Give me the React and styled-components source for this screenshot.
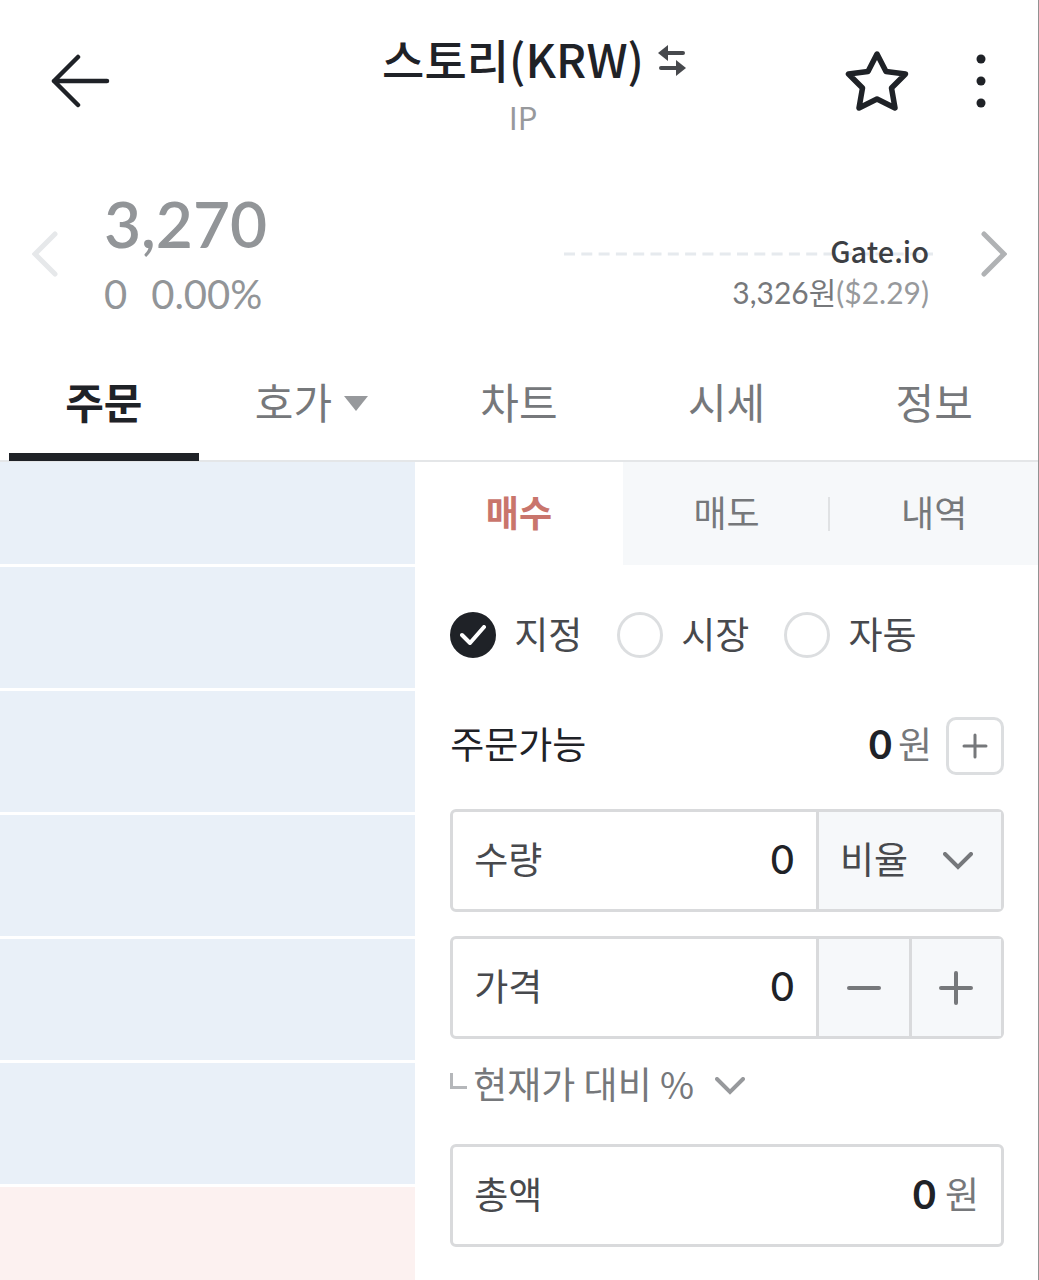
import React, { useState } from 'react';
import styled, { createGlobalStyle } from 'styled-components';

const MAIN_TABS = ['주문', '호가', '차트', '시세', '정보'];
const SIDE_TABS = ['매수', '매도', '내역'];
const ORDER_TYPES = ['지정', '시장', '자동'];
const BOOK_ROWS = ['ask', 'ask', 'ask', 'ask', 'ask', 'ask', 'bid'];

const Chevron = ({ color }) => (
  <svg width='30' height='18' viewBox='0 0 30 18' fill='none' aria-hidden='true'>
    <path d='M2 2L15 15L28 2' stroke={color} strokeWidth='4' strokeLinecap='round' />
  </svg>
);

const Plus = ({ size, stroke }) => (
  <svg width={size} height={size} viewBox={`0 0 ${size} ${size}`} aria-hidden='true'>
    <path
      d={`M2 ${size / 2}H${size - 2}M${size / 2} 2V${size - 2}`}
      stroke='#76787b'
      strokeWidth={stroke}
      strokeLinecap='round'
    />
  </svg>
);

const Header = () => (
  <TopBar>
    <IconButton aria-label='뒤로'>
      <svg width='60' height='54' viewBox='0 0 60 54' fill='none'>
        <path
          d='M28 3L4 27L28 51M4 27H57'
          stroke='#1f2227'
          strokeWidth='4.500'
          strokeLinecap='round'
          strokeLinejoin='round'
        />
      </svg>
    </IconButton>
    <TitleBox>
      <TitleRow>
        <h1>스토리(KRW)</h1>
        <IconButton aria-label='마켓 전환'>
          <svg width='28' height='32' viewBox='0 0 28 32' fill='#47494d'>
            <path d='M0 8L10 0V6H25Q27 6 27 8Q27 10 25 10H10V16Z' />
            <path d='M28 23L18 15V21H3Q1 21 1 23Q1 25 3 25H18V31Z' />
          </svg>
        </IconButton>
      </TitleRow>
      <Symbol>IP</Symbol>
    </TitleBox>
    <TopActions>
      <IconButton aria-label='관심'>
        <svg width='64' height='62' viewBox='0 0 64 62' fill='none'>
          <path
            d='M32 4L41 21.500L60.500 24L46.500 38L50 58L32 49L14 58L17.500 38L3.500 24L23 21.500Z'
            stroke='#1f2227'
            strokeWidth='5.500'
            strokeLinejoin='round'
          />
        </svg>
      </IconButton>
      <IconButton aria-label='더보기'>
        <svg width='10' height='54' viewBox='0 0 10 54' fill='#1f2227'>
          <circle cx='5' cy='5' r='4.500' />
          <circle cx='5' cy='27' r='4.500' />
          <circle cx='5' cy='49' r='4.500' />
        </svg>
      </IconButton>
    </TopActions>
  </TopBar>
);

const Ticker = () => (
  <TickerBar>
    <IconButton aria-label='이전'>
      <svg width='26' height='46' viewBox='0 0 26 46' fill='none'>
        <path d='M23 3L3 23L23 43' stroke='#e6e8ea' strokeWidth='5' strokeLinecap='round' />
      </svg>
    </IconButton>
    <PriceBox>
      <strong>3,270</strong>
      <Change>
        <span>0</span>
        <span>0.00%</span>
      </Change>
    </PriceBox>
    <Compare>
      <TrendLine viewBox='0 0 369 4' preserveAspectRatio='none' aria-hidden='true'>
        <path d='M0 2H369' stroke='#e6eaee' strokeWidth='3' strokeDasharray='11 6.300' />
      </TrendLine>
      <Exchange>
        <b>Gate.io</b>
        <span>
          3,326원<em>($2.29)</em>
        </span>
      </Exchange>
    </Compare>
    <IconButton aria-label='다음'>
      <svg width='26' height='46' viewBox='0 0 26 46' fill='none'>
        <path d='M3 3L23 23L3 43' stroke='#b0b2b4' strokeWidth='5' strokeLinecap='round' />
      </svg>
    </IconButton>
  </TickerBar>
);

const OrderForm = () => {
  const [side, setSide] = useState('매수');
  const [type, setType] = useState('지정');
  const [amount, setAmount] = useState('0');
  const [price, setPrice] = useState(0);

  return (
    <FormPanel>
      <SideTabs>
        {SIDE_TABS.map((item) => (
          <SideTab key={item} $active={item === side} onClick={() => setSide(item)}>
            {item}
          </SideTab>
        ))}
      </SideTabs>
      <Form onSubmit={(e) => e.preventDefault()}>
        <RadioRow>
          {ORDER_TYPES.map((item) => (
            <RadioLabel key={item}>
              <input
                type='radio'
                name='type'
                checked={item === type}
                onChange={() => setType(item)}
              />
              <RadioMark $checked={item === type}>
                {item === type && (
                  <svg width='26' height='20' viewBox='0 0 26 20' fill='none'>
                    <path
                      d='M2 10L10 18L24 2'
                      stroke='#fff'
                      strokeWidth='4'
                      strokeLinecap='round'
                      strokeLinejoin='round'
                    />
                  </svg>
                )}
              </RadioMark>
              <Text>{item}</Text>
            </RadioLabel>
          ))}
        </RadioRow>

        <BalanceRow>
          <Text>주문가능</Text>
          <Balance>
            <b>0</b>
            <Unit>원</Unit>
          </Balance>
          <AddButton type='button' aria-label='충전'>
            <Plus size={26} stroke={3} />
          </AddButton>
        </BalanceRow>

        <Field>
          <label htmlFor='amount'>수량</label>
          <input id='amount' value={amount} onChange={(e) => setAmount(e.target.value)} />
          <SelectBox>
            <select aria-label='비율' defaultValue='비율'>
              <option>비율</option>
            </select>
            <Chevron color='#76787b' />
          </SelectBox>
        </Field>

        <Field>
          <label htmlFor='price'>가격</label>
          <input id='price' value={price} onChange={(e) => setPrice(Number(e.target.value) || 0)} />
          <Stepper>
            <button
              type='button'
              aria-label='가격 내리기'
              onClick={() => setPrice(Math.max(0, price - 1))}
            >
              <svg width='34' height='34' viewBox='0 0 34 34'>
                <path d='M2 17H32' stroke='#76787b' strokeWidth='4' strokeLinecap='round' />
              </svg>
            </button>
            <button type='button' aria-label='가격 올리기' onClick={() => setPrice(price + 1)}>
              <Plus size={34} stroke={4} />
            </button>
          </Stepper>
        </Field>

        <RatioButton type='button'>
          <svg width='17' height='26' viewBox='0 0 17 26' fill='none' aria-hidden='true'>
            <path d='M1.500 0V14.500H17' stroke='#b5b7ba' strokeWidth='3' />
          </svg>
          <Text>현재가 대비 %</Text>
          <Chevron color='#97999c' />
        </RatioButton>

        <Field $total>
          <label htmlFor='total'>총액</label>
          <input id='total' value='0' readOnly />
          <Unit>원</Unit>
        </Field>
      </Form>
    </FormPanel>
  );
};

const App = () => {
  const [tab, setTab] = useState('주문');

  return (
    <Page>
      <GlobalStyle />
      <Header />
      <Ticker />
      <MainTabs>
        {MAIN_TABS.map((item) => (
          <MainTab key={item} $active={item === tab} onClick={() => setTab(item)}>
            <Text>{item}</Text>
            {item === '호가' && (
              <svg width='24' height='15' viewBox='0 0 24 15' fill='#97999c' aria-hidden='true'>
                <path d='M0 0H24L12 15Z' />
              </svg>
            )}
          </MainTab>
        ))}
      </MainTabs>
      <Content>
        <OrderBook>
          {BOOK_ROWS.map((kind, i) => (
            <BookRow key={i} $kind={kind} />
          ))}
        </OrderBook>
        <OrderForm />
      </Content>
    </Page>
  );
};

const GlobalStyle = createGlobalStyle`
  * {
    box-sizing: border-box;
  }
  body {
    margin: 0;
    background-color: #fff;
    font-family: 'Noto Sans CJK KR', sans-serif;
    color: #1f2227;
  }
  button, input, select {
    margin: 0;
    padding: 0;
    border: 0;
    background: none;
    font: inherit;
    color: inherit;
  }
  button {
    cursor: pointer;
  }
  svg {
    display: block;
  }
`;

const Page = styled.div`
  display: flex;
  flex-direction: column;
  min-height: 100vh;
  border-right: 1px solid #929292;
`;

const IconButton = styled.button`
  flex: none;
`;

// Hangul sits low in its line box, so labels get some room below
const Text = styled.span`
  padding-bottom: 6px;
`;

const TopBar = styled.header`
  display: grid;
  grid-template-columns: 1fr auto 1fr;
  padding: 28px 52px 0 50px;
  height: 168px;
  align-items: start;

  > ${IconButton} {
    justify-self: start;
    margin-top: 26px;
  }
`;

const TitleBox = styled.div`
  display: flex;
  flex-direction: column;
  align-items: center;
  padding-left: 10px;
`;

const TitleRow = styled.div`
  display: flex;
  align-items: center;
  gap: 14px;
  padding-left: 22px;
  h1 {
    margin: 0;
    padding-bottom: 6px;
    font-size: 46px;
    line-height: 60px;
    font-weight: 500;
  }
`;

const Symbol = styled.div`
  font-size: 31px;
  line-height: 46px;
  font-weight: 400;
  color: #97999c;
`;

const TopActions = styled.div`
  display: flex;
  justify-content: flex-end;
  align-items: center;
  gap: 67px;
  margin-top: 22px;
`;

const TickerBar = styled.section`
  display: flex;
  align-items: center;
  height: 172px;
  padding: 0 31px 0 32px;
`;

const PriceBox = styled.div`
  flex: 1;
  margin-left: 46px;
  font-family: Lato, 'Noto Sans CJK KR', sans-serif;
  color: #929598;
  strong {
    display: block;
    font-size: 64px;
    line-height: 76px;
    font-weight: 600;
  }
`;

const Change = styled.div`
  display: flex;
  gap: 24px;
  padding-top: 4px;
  font-size: 40px;
  line-height: 56px;
`;

const Compare = styled.div`
  display: grid;
  grid-template-columns: 369px;
  align-items: center;
  margin-right: 48px;
  > * {
    grid-area: 1 / 1;
  }
`;

const TrendLine = styled.svg`
  width: 100%;
  height: 4px;
`;

const Exchange = styled.div`
  display: flex;
  flex-direction: column;
  align-items: flex-end;
  padding: 34px 4px 0 0;
  b {
    font-size: 29px;
    line-height: 42px;
    font-weight: 500;
    color: #3c3f44;
  }
  span {
    font-family: Lato, 'Noto Sans CJK KR', sans-serif;
    font-size: 30px;
    line-height: 42px;
    color: #76787b;
  }
  em {
    font-style: normal;
    color: #97999c;
  }
`;

const MainTabs = styled.nav`
  display: grid;
  grid-template-columns: repeat(5, 1fr);
  height: 122px;
  border-bottom: 2px solid #e4e6e8;
`;

const MainTab = styled.button`
  display: flex;
  justify-content: center;
  align-items: center;
  gap: 12px;
  height: 121px;
  margin: 0 9px;
  padding-top: 14px;
  border-bottom: 8px solid ${({ $active }) => ($active ? '#1f2227' : 'transparent')};
  font-size: 42px;
  font-weight: ${({ $active }) => ($active ? 700 : 400)};
  color: ${({ $active }) => ($active ? '#1f2227' : '#76787b')};
`;

const Content = styled.main`
  flex: 1;
  display: grid;
  grid-template-columns: 2fr 3fr;
`;

const OrderBook = styled.ul`
  display: flex;
  flex-direction: column;
  margin: 0;
  padding: 0;
  list-style: none;
`;

const BookRow = styled.li`
  height: 124px;
  border-bottom: 3px solid #fff;
  background-color: ${({ $kind }) => ($kind === 'ask' ? '#e9f0f8' : '#fcf1f0')};
  &:first-child {
    height: 105px;
  }
  &:last-child {
    flex: 1;
    height: auto;
    border-bottom: 0;
  }
`;

const FormPanel = styled.section`
  min-width: 0;
`;

const SideTabs = styled.div`
  display: grid;
  grid-template-columns: repeat(3, 1fr);
`;

const SideTab = styled.button`
  display: flex;
  justify-content: center;
  align-items: center;
  height: 103px;
  padding-bottom: 6px;
  font-size: 36px;
  font-weight: ${({ $active }) => ($active ? 700 : 400)};
  color: ${({ $active }) => ($active ? '#c9756c' : '#76787b')};
  background-color: ${({ $active }) => ($active ? '#fff' : '#f6f8fa')};
  &:nth-child(2) {
    background-image: linear-gradient(#e0e2e4, #e0e2e4);
    background-size: 2px 34px;
    background-position: right center;
    background-repeat: no-repeat;
  }
`;

const Form = styled.form`
  display: flex;
  flex-direction: column;
  padding: 46px 34px 33px 35px;
  font-size: 37px;
`;

const RadioRow = styled.div`
  display: flex;
  gap: 35px;
`;

const RadioLabel = styled.label`
  display: flex;
  align-items: center;
  gap: 18px;
  height: 48px;
  line-height: 48px;
  color: #47494d;
  input {
    position: absolute;
    opacity: 0;
  }
  ${Text} {
    padding-bottom: 4px;
  }
`;

const RadioMark = styled.span`
  display: flex;
  justify-content: center;
  align-items: center;
  width: 46px;
  height: 46px;
  border: 3px solid ${({ $checked }) => ($checked ? '#1f2227' : '#dcdee0')};
  border-radius: 50%;
  background-color: ${({ $checked }) => ($checked ? '#1f2227' : '#fff')};
`;

const BalanceRow = styled.div`
  display: flex;
  align-items: center;
  height: 58px;
  margin: 58px 0 34px;
`;

const Unit = styled.span`
  padding-bottom: 6px;
  color: #76787b;
`;

const Balance = styled.div`
  display: flex;
  align-items: center;
  gap: 6px;
  margin: 0 14px 0 auto;
  b {
    padding-bottom: 4px;
    font-family: Lato, 'Noto Sans CJK KR', sans-serif;
    font-size: 40px;
    line-height: 58px;
    font-weight: 700;
  }
`;

const AddButton = styled.button`
  display: flex;
  justify-content: center;
  align-items: center;
  width: 58px;
  height: 58px;
  border: 3px solid #dcdee0;
  border-radius: 10px;
`;

const Field = styled.div`
  display: flex;
  align-items: center;
  height: 103px;
  border: 3px solid #d9dadc;
  border-radius: 6px;
  & + & {
    margin-top: 24px;
  }
  label {
    padding: 0 0 6px 21px;
    color: #47494d;
  }
  input {
    flex: 1;
    min-width: 0;
    height: 58px;
    padding: 0 ${({ $total }) => ($total ? '9px' : '22px')} 3px 0;
    font-family: Lato, 'Noto Sans CJK KR', sans-serif;
    font-size: 40px;
    font-weight: ${({ $total }) => ($total ? 700 : 500)};
    text-align: right;
    outline: 0;
  }
  ${Unit} {
    padding-right: 22px;
  }
`;

const SelectBox = styled.div`
  display: flex;
  align-items: center;
  align-self: stretch;
  width: 185px;
  padding: 0 28px 0 21px;
  border-left: 3px solid #d9dadc;
  background-color: #f6f8fa;
  select {
    flex: 1;
    height: 64px;
    padding-bottom: 6px;
    appearance: none;
    color: #47494d;
  }
`;

const Stepper = styled.div`
  display: grid;
  grid-template-columns: 1fr 1fr;
  align-self: stretch;
  width: 185px;
  button {
    display: flex;
    justify-content: center;
    align-items: center;
    border-left: 3px solid #d9dadc;
    background-color: #f6f8fa;
  }
`;

const RatioButton = styled.button`
  display: flex;
  align-items: center;
  align-self: flex-start;
  height: 58px;
  margin: 18px 0 29px;
  color: #76787b;
  ${Text} {
    margin: 0 21px 0 6px;
  }
`;

export default App;
